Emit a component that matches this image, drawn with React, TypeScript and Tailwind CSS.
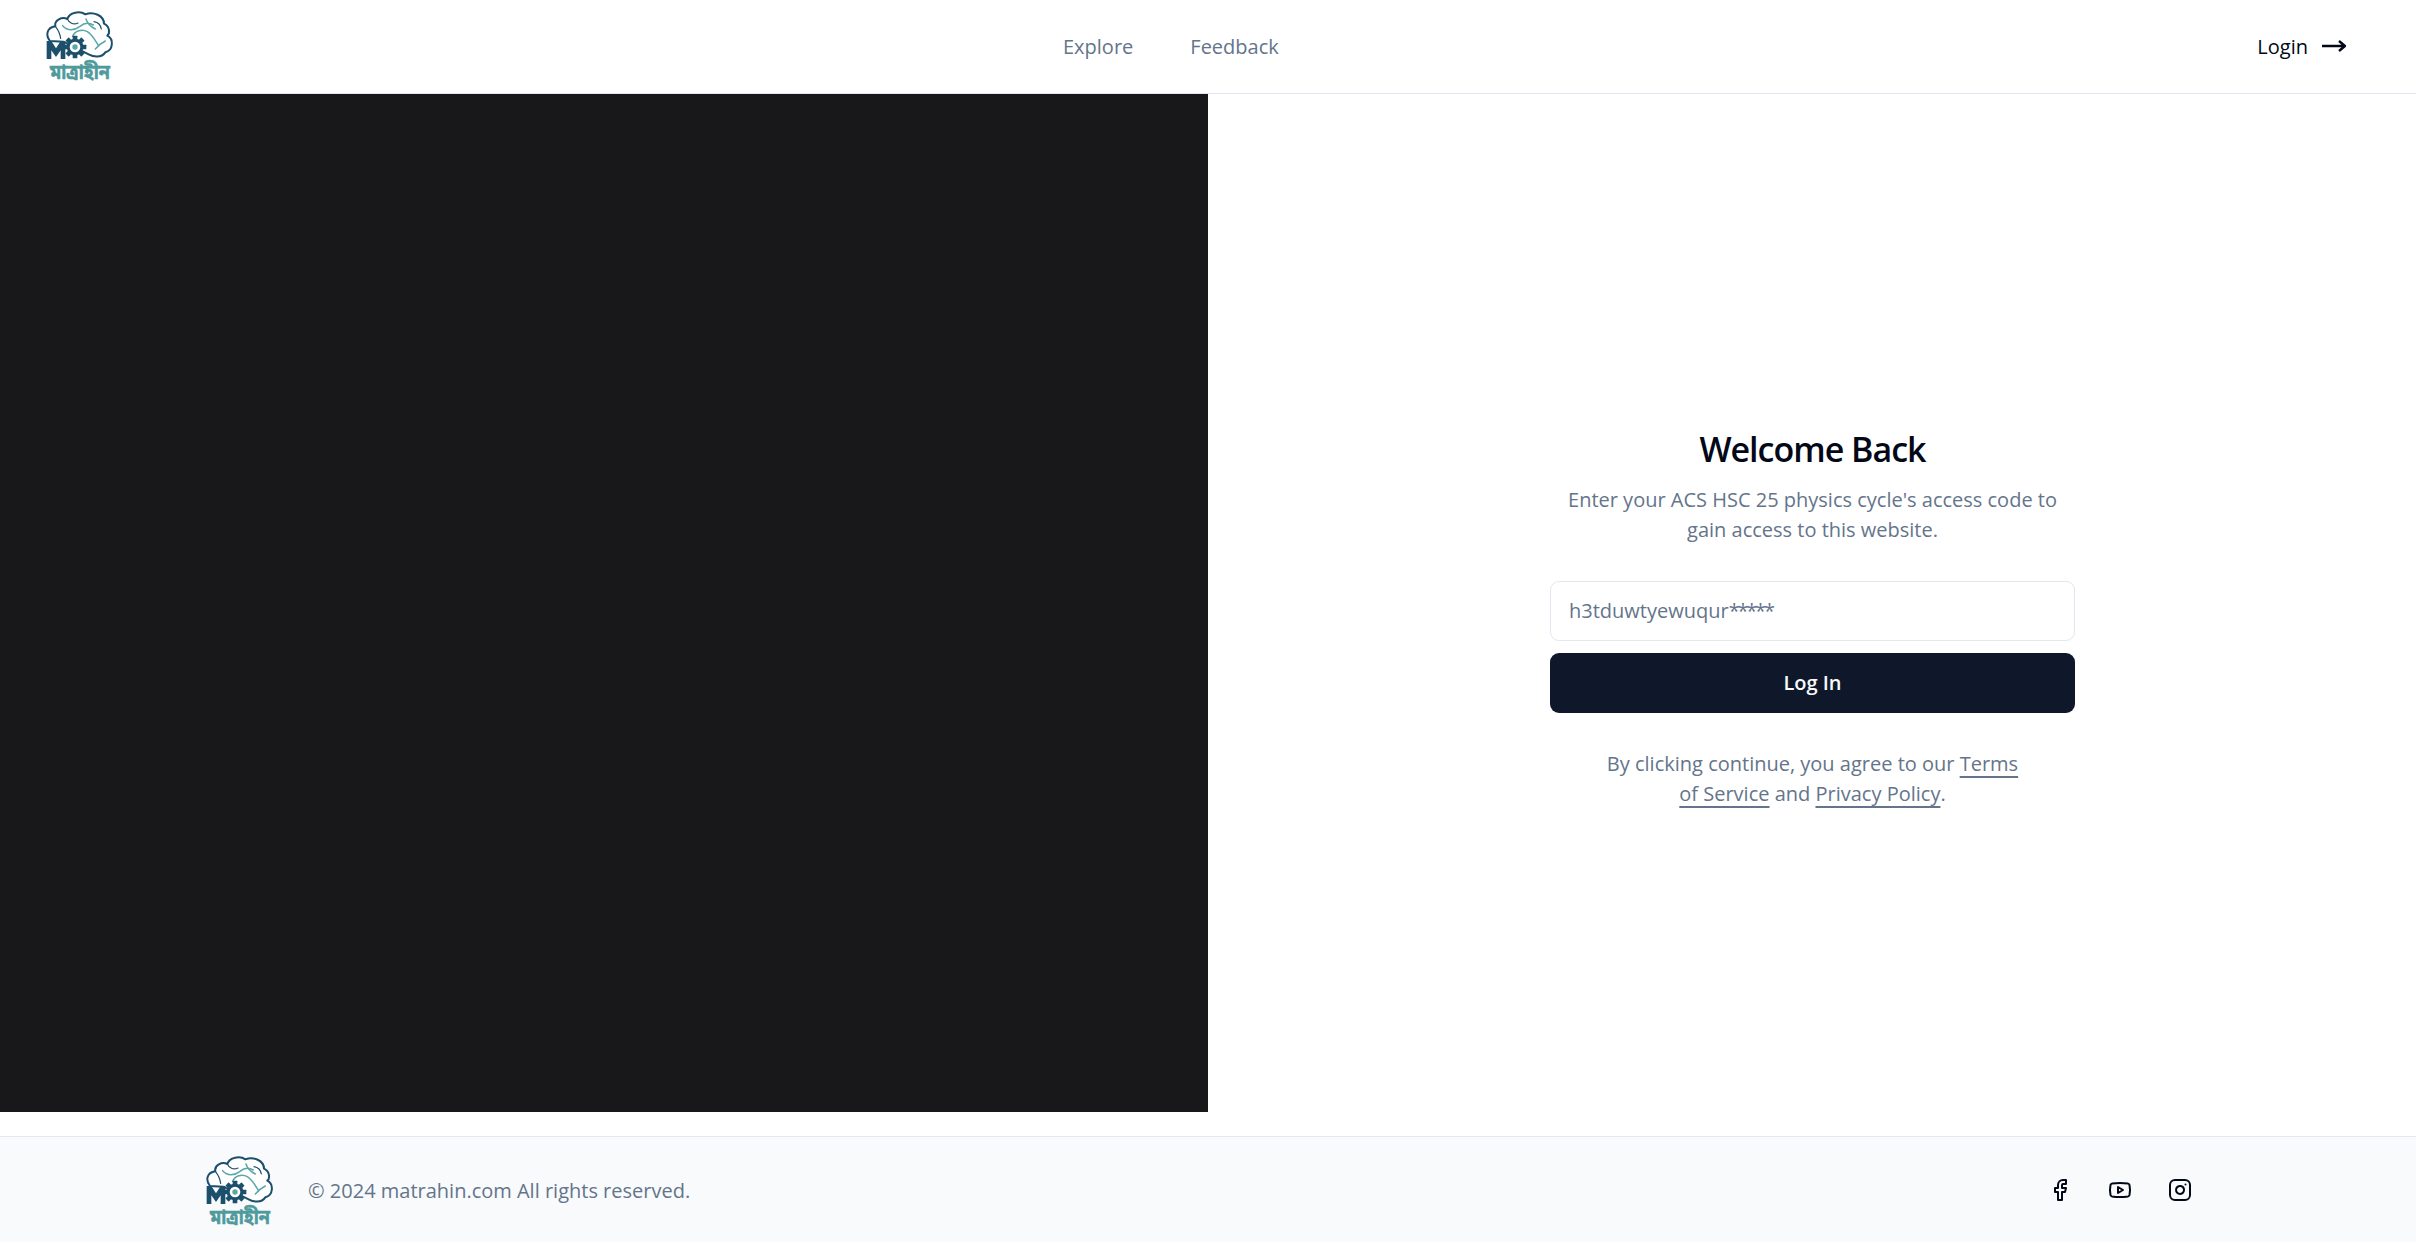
import { Facebook, Youtube, Instagram } from "lucide-react";

function Logo({ className }: { className: string }) {
  return (
    <svg viewBox="45 25 210 240" className={`overflow-visible ${className}`} aria-label="matrahin logo">
      <path
        d="M60 118 C46 100 50 78 76 74 C72 56 96 44 112 52 C118 32 150 26 166 38 C190 28 222 42 222 66 C240 74 240 96 232 102 C252 112 250 146 226 152 C214 170 190 166 176 158 L100 120 Z"
        fill="#fff"
        stroke="#1b4f6b"
        strokeWidth="6"
        strokeLinejoin="round"
      />
      <g fill="none" stroke="#5aa6a8" strokeWidth="4.5" strokeLinecap="round">
        <path d="M98 72 C112 88 132 88 150 74 C162 64 176 62 190 70" />
        <path d="M128 104 C134 88 156 80 172 90 C188 100 196 118 206 132" />
        <path d="M168 52 C172 66 184 76 196 82" />
        <path d="M196 142 C204 132 214 124 226 118" />
      </g>
      <g fill="none" stroke="#1b4f6b" strokeWidth="3.5" strokeLinecap="round">
        <path d="M112 52 C118 66 132 70 144 64" />
        <path d="M192 60 C204 62 212 70 214 82" />
        <path d="M76 74 C84 84 90 94 92 110" />
      </g>
      <path d="M50 118 L64 118 L78 140 L92 118 L106 118 L106 172 L92 172 L92 146 L78 166 L64 146 L64 172 L50 172 Z" fill="#1b4f6b" />
      <g fill="#1b4f6b">
        <circle cx="135" cy="136" r="25" />
        <rect x="128" y="102" width="14" height="68" rx="2" />
        <rect x="101" y="129" width="68" height="14" rx="2" />
        <rect x="128" y="102" width="14" height="68" rx="2" transform="rotate(45 135 136)" />
        <rect x="128" y="102" width="14" height="68" rx="2" transform="rotate(-45 135 136)" />
      </g>
      <circle cx="135" cy="136" r="16" fill="#fff" />
      <circle cx="135" cy="136" r="8" fill="#5aa6a8" />
      <text
        x="150"
        y="232"
        textAnchor="middle"
        fontSize="60"
        fontWeight="700"
        fill="#4f9a9c"
        stroke="#4f9a9c"
        strokeWidth="1.5"
        textLength="180"
        lengthAdjust="spacingAndGlyphs"
        fontFamily="'Noto Sans Bengali','Noto Sans','DejaVu Sans',sans-serif"
      >
        মাত্রাহীন
      </text>
    </svg>
  );
}

export default function App() {
  return (
    <div className="flex min-h-[1254px] flex-col bg-white font-['Open_Sans','Noto_Sans',sans-serif] text-[20px] leading-[30px] text-[#64748b]">
      <header className="flex h-[94px] shrink-0 items-center border-b border-[#e2e8f0] pl-[45px] pr-[70px]">
        <div className="mt-[6px] w-[1018px] shrink-0">
          <Logo className="h-[80px] w-[70px]" />
        </div>
        <nav className="flex gap-[57px] font-medium">
          <a>Explore</a>
          <a>Feedback</a>
        </nav>
        <div className="ml-auto flex items-center gap-[14px] font-medium text-[#020817]">
          <span>Login</span>
          <svg className="-mt-[2px]" width="24" height="14" viewBox="0 0 24 14" fill="none" stroke="currentColor" strokeWidth="2.4">
            <path d="M0 7 H23 M17 2 L23 7 L17 12" />
          </svg>
        </div>
      </header>

      <main className="grid h-[1018px] shrink-0 grid-cols-2">
        <div className="bg-[#18181b]" />
        <div className="flex items-center justify-center pl-[1px] pt-[28px]">
          <div className="flex w-[525px] flex-col gap-[36px]">
            <div className="flex flex-col gap-[12px] text-center">
              <h1 className="text-[34px] leading-[48px] font-semibold tracking-[-1px] text-[#020817]">Welcome Back</h1>
              <p>Enter your ACS HSC 25 physics cycle's access code to gain access to this website.</p>
            </div>
            <div className="flex flex-col gap-[12px]">
              <div role="textbox" className="flex h-[60px] w-full items-center rounded-[9px] border border-[#e2e8f0] bg-white px-[18px]">
                <span>h3tduwtyewuqur</span>
                <span className="tracking-[-2.2px]">*****</span>
              </div>
              <button className="h-[60px] w-full rounded-[9px] bg-[#0f172a] font-semibold text-[#f8fafc]">Log In</button>
            </div>
            <p className="px-[48px] text-center">
              By clicking continue, you agree to our{" "}
              <a className="underline decoration-2 underline-offset-[5px]">Terms of Service</a> and{" "}
              <a className="underline decoration-2 underline-offset-[5px]">Privacy Policy</a>.
            </p>
          </div>
        </div>
      </main>

      <footer className="mt-[24px] flex h-[106px] shrink-0 items-center justify-between border-t border-[#e2e8f0] bg-[#f8fafc] pl-[205px] pr-[224px]">
        <div className="flex items-center gap-[33px]">
          <Logo className="mt-[10px] h-[80px] w-[70px]" />
          <span className="pt-[2px]">© 2024 matrahin.com All rights reserved.</span>
        </div>
        <div className="flex items-center gap-[36px] text-[#020817]">
          <Facebook size={24} />
          <Youtube size={24} />
          <Instagram size={24} />
        </div>
      </footer>
    </div>
  );
}
